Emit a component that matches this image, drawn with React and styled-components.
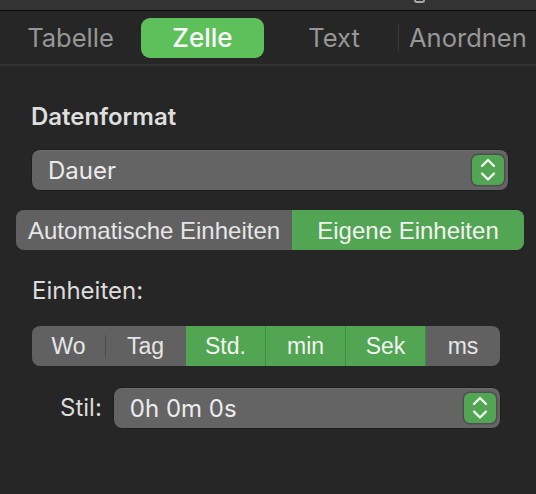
import React from "react";
import styled, { createGlobalStyle } from "styled-components";

const GlobalStyle = createGlobalStyle`
  *, *::before, *::after { box-sizing: border-box; }
  html, body { margin: 0; padding: 0; background: #262626; }
  body {
    width: 536px;
    height: 494px;
    overflow: hidden;
    font-family: Inter, "Noto Sans", sans-serif;
    -webkit-font-smoothing: antialiased;
  }
`;

const Page = styled.div`
  width: 536px;
  height: 494px;
  background: #262626;
  display: flex;
  flex-direction: column;
`;

const TopStrip = styled.div`
  height: 11px;
  background: #333333;
  border-bottom: 1px solid #0a0a0a;
  display: flex;
  overflow: hidden;
`;

const DescenderMark = styled.div`
  margin-left: 414px;
  width: 11px;
  height: 3px;
  border: 2px solid #a8a8a8;
  border-top: none;
  border-radius: 0 0 6px 6px;
`;

const TabBar = styled.div`
  height: 55px;
  display: flex;
  align-items: center;
  padding-left: 12px;
  background: #262626;
  border-bottom: 2px solid #323232;
`;

const Tab = styled.div`
  width: ${(p) => p.$w}px;
  padding-left: ${(p) => p.$pad || 0}px;
  text-align: ${(p) => p.$align || "center"};
  font-size: 25.5px;
  line-height: 28px;
  color: #979797;
  white-space: nowrap;
`;

const ActiveTab = styled.div`
  width: 123px;
  height: 40px;
  margin-left: 12px;
  border-radius: 9px;
  background: #5ec05b;
  color: #ffffff;
  font-size: 26px;
  font-weight: 500;
  display: flex;
  align-items: center;
  justify-content: center;
`;

const TabDivider = styled.div`
  width: 1px;
  height: 26px;
  background: #3a3a3a;
`;

const Content = styled.div`
  display: flex;
  flex-direction: column;
  padding-top: 37px;
`;

const SectionTitle = styled.div`
  margin-left: 31px;
  font-size: 24px;
  font-weight: 600;
  line-height: 28px;
  color: #dedede;
`;

const Label = styled.div`
  margin-left: ${(p) => p.$left || 0}px;
  margin-top: ${(p) => p.$top || 0}px;
  font-size: 24px;
  line-height: 28px;
  color: #dcdcdc;
`;

const Popup = styled.div`
  margin-left: ${(p) => p.$left || 0}px;
  margin-top: ${(p) => p.$top || 0}px;
  width: ${(p) => p.$w}px;
  height: 40px;
  border-radius: 8px;
  background: #646464;
  box-shadow: inset 0 1px 0 rgba(255, 255, 255, 0.06), 0 0 0 0.5px rgba(0, 0, 0, 0.4);
  display: flex;
  align-items: center;
  justify-content: space-between;
  padding: 2px 4px 0 16px;
  color: #ececec;
  font-size: 24px;
`;

const PopupValue = styled.span`
  line-height: 28px;
`;

const StepperBox = styled.div`
  width: 32px;
  height: 30px;
  margin-top: -2px;
  border-radius: 6px;
  background: #52a552;
  box-shadow: 0 0 0 1.5px rgba(40, 40, 40, 0.35);
  display: flex;
  align-items: center;
  justify-content: center;
`;

const Segmented = styled.div`
  margin-left: ${(p) => p.$left}px;
  margin-top: ${(p) => p.$top}px;
  width: ${(p) => p.$w}px;
  height: 40px;
  border-radius: 8px;
  overflow: hidden;
  display: flex;
  background: #616161;
  font-family: "Liberation Sans", Arial, sans-serif;
`;

const Segment = styled.div`
  width: ${(p) => p.$w}px;
  height: 100%;
  display: flex;
  align-items: center;
  justify-content: center;
  font-size: ${(p) => p.$size || 23}px;
  padding-top: 1px;
  color: ${(p) => (p.$on ? "#f2f2f2" : "#e6e6e6")};
  background: ${(p) => (p.$on ? "#52a552" : "transparent")};
  border-left: ${(p) => (p.$edge === "green" ? "1.5px solid #3f8a3f" : "none")};
  position: relative;
`;

const SegmentTick = styled.span`
  position: absolute;
  left: 0;
  top: 9px;
  bottom: 9px;
  width: 1px;
  background: #4b4b4b;
`;

const StilRow = styled.div`
  display: flex;
  align-items: center;
  margin-top: 22px;
  padding-left: 60px;
  gap: 12px;
`;

function Stepper() {
  return (
    <StepperBox>
      <svg width="32" height="30" viewBox="0 0 32 30">
        <path
          d="M10 11 L16 5 L22 11"
          fill="none"
          stroke="#eef7ee"
          strokeWidth="2.4"
          strokeLinecap="round"
          strokeLinejoin="round"
        />
        <path
          d="M10 18.5 L16 24.5 L22 18.5"
          fill="none"
          stroke="#eef7ee"
          strokeWidth="2.4"
          strokeLinecap="round"
          strokeLinejoin="round"
        />
      </svg>
    </StepperBox>
  );
}

const units = [
  { label: "Wo", w: 73, on: false },
  { label: "Tag", w: 81, on: false, tick: true },
  { label: "Std.", w: 79, on: true },
  { label: "min", w: 80, on: true, edge: "green" },
  { label: "Sek", w: 80, on: true, edge: "green" },
  { label: "ms", w: 75, on: false, edge: "green" },
];

export default function App() {
  return (
    <Page>
      <GlobalStyle />
      <TopStrip>
        <DescenderMark />
      </TopStrip>
      <TabBar>
        <Tab $w={117}>Tabelle</Tab>
        <ActiveTab>Zelle</ActiveTab>
        <Tab $w={134} $pad={6}>Text</Tab>
        <TabDivider />
        <Tab $w={130} $pad={10} $align="left">Anordnen</Tab>
      </TabBar>
      <Content>
        <SectionTitle>Datenformat</SectionTitle>
        <Popup $left={32} $top={19} $w={476}>
          <PopupValue>Dauer</PopupValue>
          <Stepper />
        </Popup>
        <Segmented $left={16} $top={20} $w={508}>
          <Segment $w={276} $size={24}>Automatische Einheiten</Segment>
          <Segment $w={232} $size={24} $on>Eigene Einheiten</Segment>
        </Segmented>
        <Label $left={32} $top={27}>Einheiten:</Label>
        <Segmented $left={32} $top={21} $w={468}>
          {units.map((u) => (
            <Segment key={u.label} $w={u.w} $on={u.on} $edge={u.edge}>
              {u.tick && <SegmentTick />}
              {u.label}
            </Segment>
          ))}
        </Segmented>
        <StilRow>
          <Label>Stil:</Label>
          <Popup $w={386}>
            <PopupValue>0h 0m 0s</PopupValue>
            <Stepper />
          </Popup>
        </StilRow>
      </Content>
    </Page>
  );
}
